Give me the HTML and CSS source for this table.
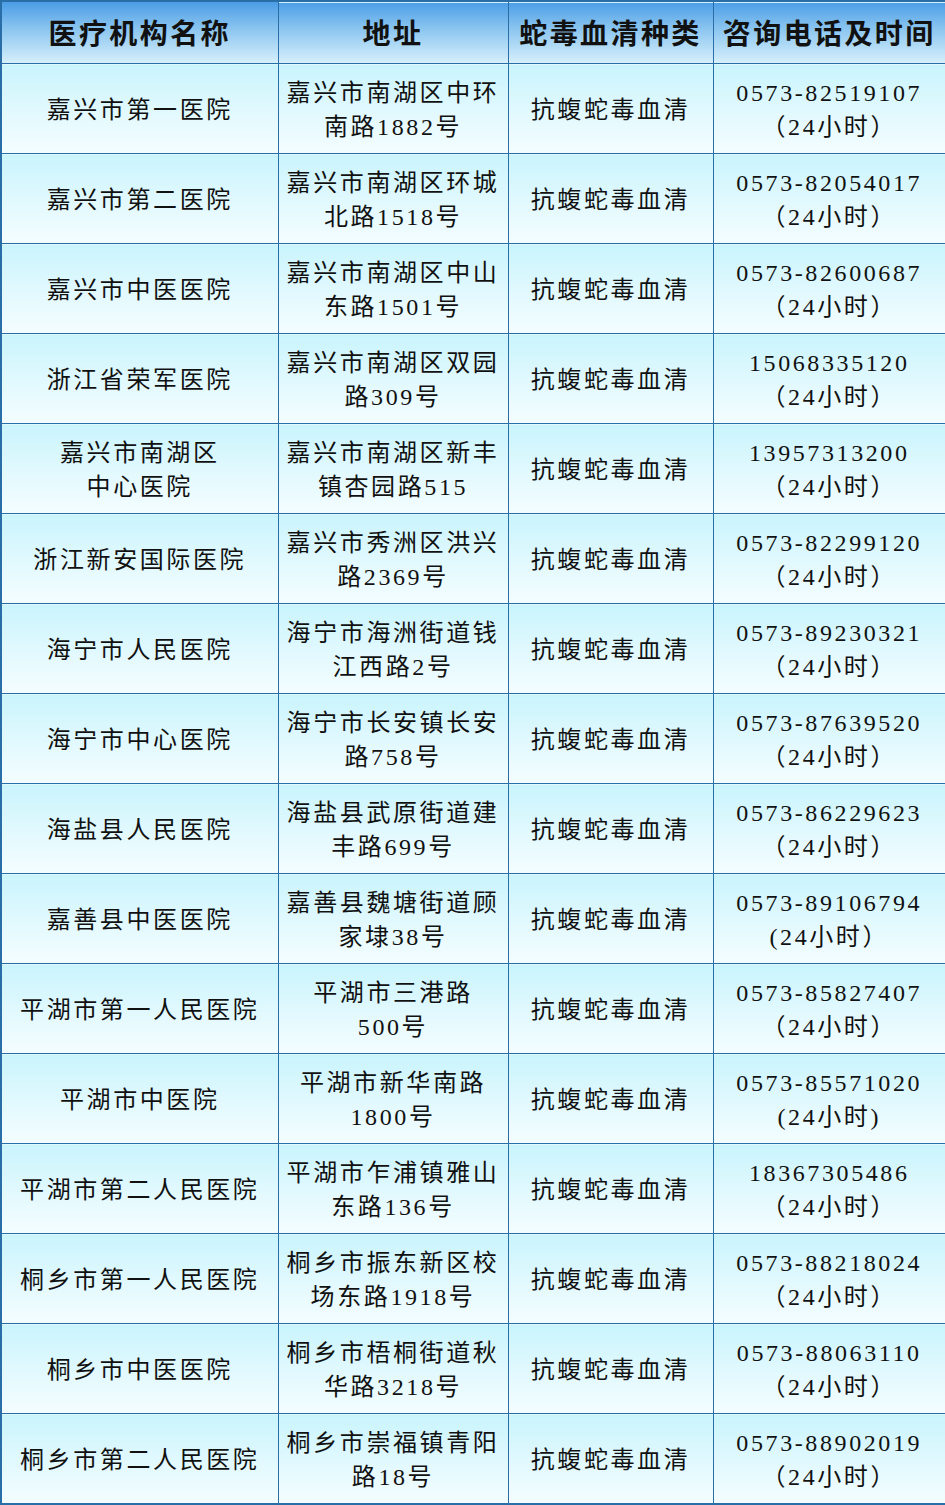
FILE: index.html
```html
<!DOCTYPE html>
<html lang="zh-CN">
<head>
<meta charset="utf-8">
<title>嘉兴市抗蛇毒血清医疗机构</title>
<link rel="stylesheet" href="styles.css">
</head>
<body>
<table class="serum-table">
  <colgroup>
    <col class="c-name">
    <col class="c-addr">
    <col class="c-type">
    <col class="c-tel">
  </colgroup>
  <thead>
    <tr class="head-row">
      <th>医疗机构名称</th>
      <th>地址</th>
      <th>蛇毒血清种类</th>
      <th>咨询电话及时间</th>
    </tr>
  </thead>
  <tbody>
    <tr><td>嘉兴市第一医院</td><td>嘉兴市南湖区中环<br>南路1882号</td><td>抗蝮蛇毒血清</td><td>0573-82519107<br>（24小时）</td></tr>
    <tr><td>嘉兴市第二医院</td><td>嘉兴市南湖区环城<br>北路1518号</td><td>抗蝮蛇毒血清</td><td>0573-82054017<br>（24小时）</td></tr>
    <tr><td>嘉兴市中医医院</td><td>嘉兴市南湖区中山<br>东路1501号</td><td>抗蝮蛇毒血清</td><td>0573-82600687<br>（24小时）</td></tr>
    <tr><td>浙江省荣军医院</td><td>嘉兴市南湖区双园<br>路309号</td><td>抗蝮蛇毒血清</td><td>15068335120<br>（24小时）</td></tr>
    <tr><td>嘉兴市南湖区<br>中心医院</td><td>嘉兴市南湖区新丰<br>镇杏园路515</td><td>抗蝮蛇毒血清</td><td>13957313200<br>（24小时）</td></tr>
    <tr><td>浙江新安国际医院</td><td>嘉兴市秀洲区洪兴<br>路2369号</td><td>抗蝮蛇毒血清</td><td>0573-82299120<br>（24小时）</td></tr>
    <tr><td>海宁市人民医院</td><td>海宁市海洲街道钱<br>江西路2号</td><td>抗蝮蛇毒血清</td><td>0573-89230321<br>（24小时）</td></tr>
    <tr><td>海宁市中心医院</td><td>海宁市长安镇长安<br>路758号</td><td>抗蝮蛇毒血清</td><td>0573-87639520<br>（24小时）</td></tr>
    <tr><td>海盐县人民医院</td><td>海盐县武原街道建<br>丰路699号</td><td>抗蝮蛇毒血清</td><td>0573-86229623<br>（24小时）</td></tr>
    <tr><td>嘉善县中医医院</td><td>嘉善县魏塘街道顾<br>家埭38号</td><td>抗蝮蛇毒血清</td><td>0573-89106794<br>(24小时）</td></tr>
    <tr><td>平湖市第一人民医院</td><td>平湖市三港路<br>500号</td><td>抗蝮蛇毒血清</td><td>0573-85827407<br>（24小时）</td></tr>
    <tr><td>平湖市中医院</td><td>平湖市新华南路<br>1800号</td><td>抗蝮蛇毒血清</td><td>0573-85571020<br>(24小时)</td></tr>
    <tr><td>平湖市第二人民医院</td><td>平湖市乍浦镇雅山<br>东路136号</td><td>抗蝮蛇毒血清</td><td>18367305486<br>（24小时）</td></tr>
    <tr><td>桐乡市第一人民医院</td><td>桐乡市振东新区校<br>场东路1918号</td><td>抗蝮蛇毒血清</td><td>0573-88218024<br>（24小时）</td></tr>
    <tr><td>桐乡市中医医院</td><td>桐乡市梧桐街道秋<br>华路3218号</td><td>抗蝮蛇毒血清</td><td>0573-88063110<br>（24小时）</td></tr>
    <tr><td>桐乡市第二人民医院</td><td>桐乡市崇福镇青阳<br>路18号</td><td>抗蝮蛇毒血清</td><td>0573-88902019<br>（24小时）</td></tr>
  </tbody>
</table>
</body>
</html>
```

FILE: styles.css
```css
html, body {
  margin: 0;
  padding: 0;
  background: #ffffff;
}

.serum-table {
  border-collapse: collapse;
  table-layout: fixed;
  width: 945px;
  border: 2px solid #2a6ea8;
  font-family: "Liberation Serif", "Noto Sans CJK SC", serif;
  color: #111111;
}

.c-name { width: 277px; }
.c-addr { width: 230px; }
.c-type { width: 205px; }
.c-tel  { width: 233px; }

.serum-table th,
.serum-table td {
  border: 1px solid #2a6ea8;
  padding: 0;
  text-align: center;
  vertical-align: middle;
}

.head-row th {
  height: 57px;
  font-size: 28px;
  font-weight: bold;
  letter-spacing: 2.4px;
  line-height: 34px;
  padding-top: 4px;
  background: linear-gradient(to bottom, #4b9de6 0%, #8cc6f0 45%, #d6effb 100%);
}

.serum-table td {
  height: 86px;
  font-size: 24px;
  letter-spacing: 2.6px;
  line-height: 34px;
  font-weight: normal;
  padding-top: 3px;
  background: linear-gradient(to bottom, #c9f4fc 0%, #e2f9fe 55%, #f4fdff 100%);
}
```
